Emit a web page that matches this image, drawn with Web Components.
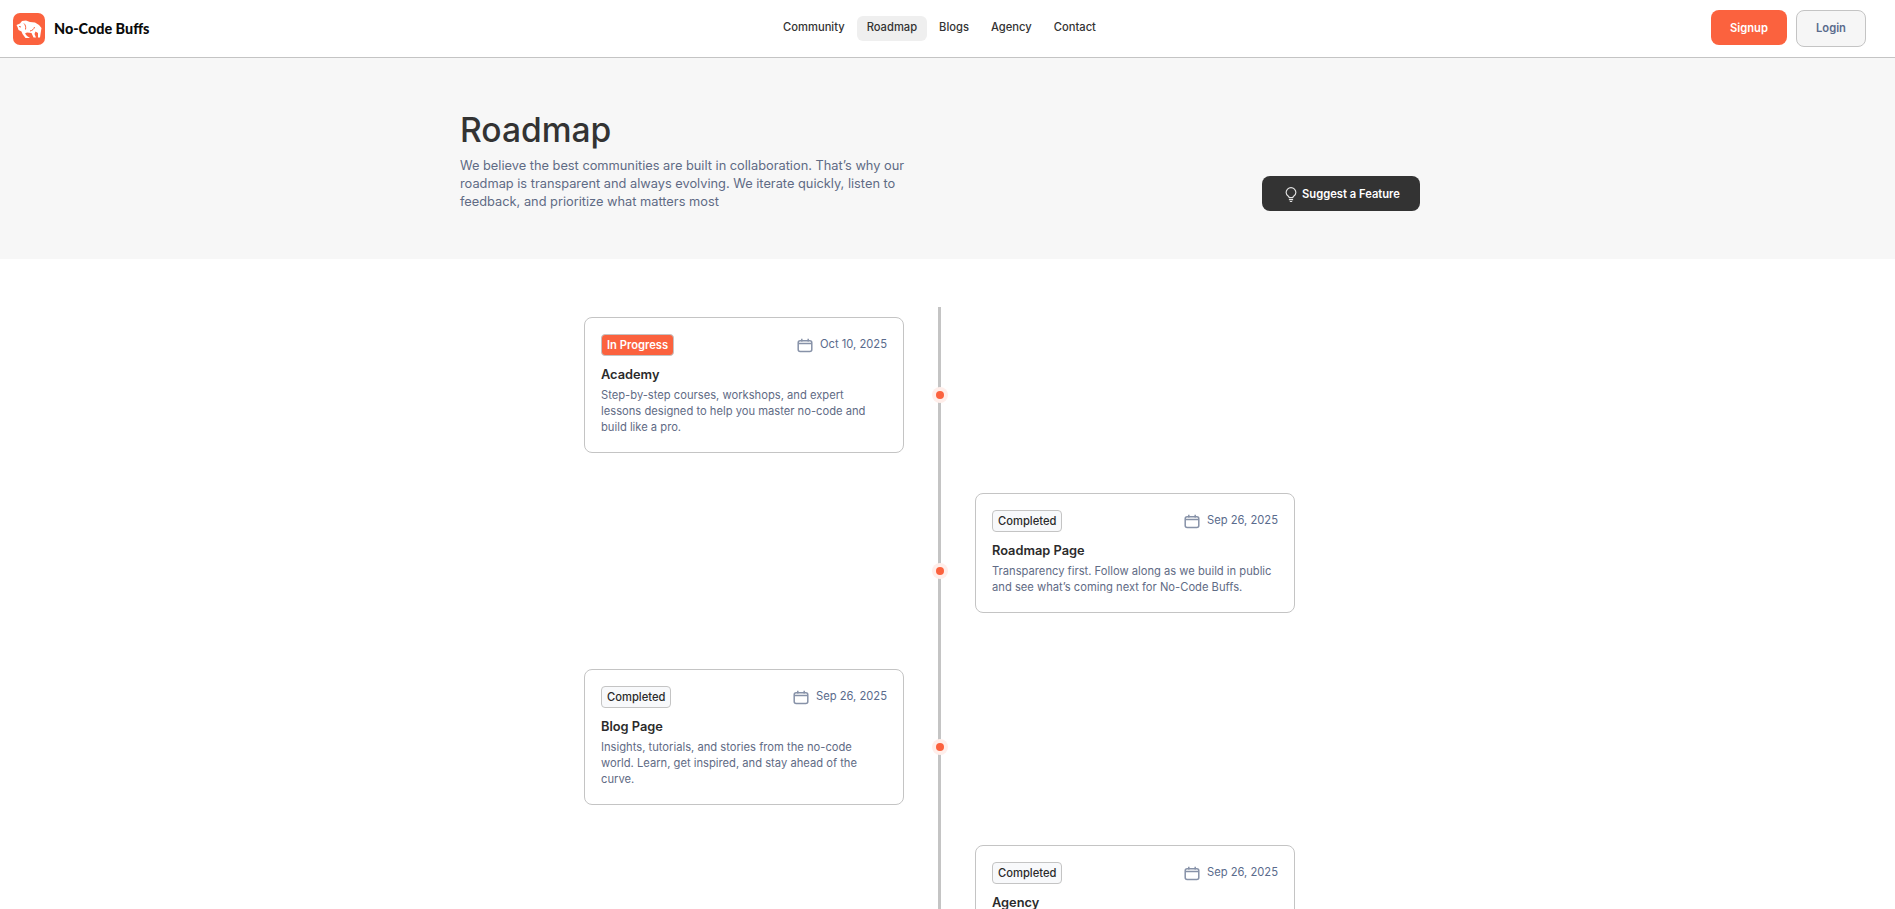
<!DOCTYPE html>
<html lang="en">
<head>
<meta charset="utf-8">
<title>Roadmap - No-Code Buffs</title>
<style>
  html, body { margin: 0; height: 100%; overflow: hidden; background: #fff; }
  body { font-family: Inter, "Liberation Sans", sans-serif; }
</style>
</head>
<body>
<site-nav></site-nav>
<roadmap-hero></roadmap-hero>
<road-timeline>
  <road-item side="left" status="In Progress" active date="Oct 10, 2025" heading="Academy">Step-by-step courses, workshops, and expert lessons designed to help you master no-code and build like a pro.</road-item>
  <road-item side="right" status="Completed" date="Sep 26, 2025" heading="Roadmap Page">Transparency first. Follow along as we build in public and see what’s coming next for No-Code Buffs.</road-item>
  <road-item side="left" status="Completed" date="Sep 26, 2025" heading="Blog Page">Insights, tutorials, and stories from the no-code world. Learn, get inspired, and stay ahead of the curve.</road-item>
  <road-item side="right" status="Completed" date="Sep 26, 2025" heading="Agency"></road-item>
</road-timeline>

<script>
/* top bar: logo, centered links, auth buttons */
class SiteNav extends HTMLElement {
  constructor() {
    super();
    const root = this.attachShadow({ mode: 'open' });
    root.innerHTML = `
      <style>
        :host { display: block; background: #fff; border-bottom: 1px solid #c4c4c4; }
        .bar { width: 1880px; height: 57px; box-sizing: border-box; padding: 0 14px 0 13px;
               display: grid; grid-template-columns: 1fr auto 1fr; align-items: center; }
        .logo { display: flex; align-items: center; gap: 9px; font-family: Lato, sans-serif;
                font-weight: 900; font-size: 14.4px; color: #0b0b0b; }
        .logo svg { width: 32px; height: 32px; display: block; }
        nav { display: flex; gap: 2px; font-size: 11.2px; font-weight: 500; color: #333; }
        nav a { padding: 0 10px; height: 25px; line-height: 22px; border-radius: 6px; }
        nav a.on { background: #efefef; }
        .auth { justify-self: end; align-self: start; padding-top: 10px; display: flex; gap: 9px; align-items: flex-start; font-size: 11.2px; font-weight: 600; }
        .auth span { display: flex; align-items: center; justify-content: center; box-sizing: border-box; border-radius: 8px; }
        .signup { width: 76px; height: 35px; background: #fb623e; color: #fff; }
        .login { width: 70px; height: 37px; padding-bottom: 2px; background: #f6f6f6; border: 1px solid #c4c4c4; color: #5a6b8c; }
      </style>
      <div class="bar">
        <div class="logo">
          <svg viewBox="0 0 32 32" aria-hidden="true">
            <rect width="32" height="32" rx="7" fill="#fb623e"/>
            <path fill="#fff" d="M3.500 12 7 10.500 9 8 13 7.500 17 9 22 9.500 26 12 28.500 15 28 18 27 24.500 25 24.500 25 20 22.500 18.500 21.500 21 23 24.500 20.500 24.500 18.500 20 14 19.500 12 20.500 14 23 17 25 12.500 25 9.500 21 8.500 18.500 5.500 17 4.500 14Z"/>
            <path fill="none" stroke="#fb623e" stroke-width="1" d="M11 10.500c1.500 1.500 2 3.500 1.500 6M17 18c2.500-.5 4-2 4.500-4M6 13.500l2 .5"/>
          </svg>
          <span>No-Code Buffs</span>
        </div>
        <nav>
          <a>Community</a><a class="on">Roadmap</a><a>Blogs</a><a>Agency</a><a>Contact</a>
        </nav>
        <div class="auth"><span class="signup">Signup</span><span class="login">Login</span></div>
      </div>`;
  }
}

/* gray header band with the title and the suggest button */
class RoadmapHero extends HTMLElement {
  constructor() {
    super();
    const root = this.attachShadow({ mode: 'open' });
    root.innerHTML = `
      <style>
        :host { display: block; background: #f7f7f7; height: 201px; }
        .wrap { width: 960px; margin-left: 460px; height: 100%; display: flex; justify-content: space-between; }
        h1 { margin: 0 0 5px; padding-top: 50px; font-size: 33.6px; line-height: 44px; font-weight: 500; color: #333; }
        p { margin: 0; width: 470px; font-size: 12.8px; line-height: 18px; color: #5f6b85; }
        .btn { margin-top: 118px; width: 158px; height: 35px; box-sizing: border-box; background: #333; color: #fff;
               border-radius: 8px; display: flex; align-items: center; justify-content: center; gap: 2px;
               font-size: 11.2px; font-weight: 600; }
        svg { width: 18px; height: 18px; fill: none; stroke: #e4e4e4; stroke-width: 1.5; stroke-linecap: round; stroke-linejoin: round; }
      </style>
      <div class="wrap">
        <div>
          <h1>Roadmap</h1>
          <p>We believe the best communities are built in collaboration. That’s why our roadmap is transparent and always evolving. We iterate quickly, listen to feedback, and prioritize what matters most</p>
        </div>
        <div class="btn">
          <svg viewBox="0 0 24 24" aria-hidden="true"><path d="M8.500 15c-1.900-1.300-3-3.200-3-5a6.500 6.500 0 0 1 13 0c0 1.800-1.100 3.700-3 5-.7.500-1 1-1 1.800h-5c0-.8-.3-1.300-1-1.800Z"/><path d="M9.800 19.500h4.400M11 22h2"/></svg>
          <span>Suggest a Feature</span>
        </div>
      </div>`;
  }
}

/* vertical line down the page, items sit either side of it */
class RoadTimeline extends HTMLElement {
  constructor() {
    super();
    const root = this.attachShadow({ mode: 'open' });
    root.innerHTML = `
      <style>
        :host { display: block; padding-top: 48px; }
        .line { position: relative; width: 711px; margin-left: 584px; display: grid; grid-auto-rows: 176px; padding-top: 10px; }
        .line::before { content: ""; position: absolute; left: 354px; top: 0; bottom: 0; width: 3px; background: #c4c4c4; }
      </style>
      <div class="line"><slot></slot></div>`;
  }
}

class RoadItem extends HTMLElement {
  connectedCallback() {
    if (this.shadowRoot) return;
    const root = this.attachShadow({ mode: 'open' });
    const side = this.getAttribute('side');
    root.innerHTML = `
      <style>
        :host { display: flex; position: relative; height: 176px; justify-content: ${side === 'left' ? 'flex-start' : 'flex-end'}; }
        .card { width: 320px; height: max-content; box-sizing: border-box; padding: 16px 16px 17px; background: #fff;
                border: 1px solid #c4c4c4; border-radius: 8px; }
        .top { display: flex; justify-content: space-between; align-items: center; height: 22px; }
        .badge { box-sizing: border-box; height: 22px; padding: 0 5px 1px; display: flex; align-items: center; border-radius: 4px;
                 border: 1px solid #c4c4c4; background: #f8f9fb; color: #2b2b2b; font-size: 11.2px; font-weight: 500; }
        .badge.on { background: #fb623e; color: #fff; font-weight: 600; }
        .date { display: flex; align-items: center; gap: 7px; font-size: 11.2px; color: #5a6b8c; }
        .date b { font-weight: 400; padding-bottom: 2px; }
        .date svg { width: 16px; height: 16px; fill: none; stroke: #8792a8; stroke-width: 1.500; }
        h3 { margin: 9px 0 0; font-size: 12.8px; line-height: 20px; font-weight: 600; color: #2b2b2b; }
        p { margin: 2px 0 0; font-size: 11.2px; line-height: 16px; color: #5f6b85; }
        .dot { position: absolute; left: 352px; top: 74px; width: 8px; height: 8px; border-radius: 50%;
               background: #fb623e; box-shadow: 0 0 0 4px #ffeeea; }
      </style>
      <div class="card">
        <div class="top">
          <span class="badge${this.hasAttribute('active') ? ' on' : ''}">${this.getAttribute('status')}</span>
          <span class="date">
            <svg viewBox="0 0 16 16" aria-hidden="true"><rect x="1.200" y="3.700" width="13.600" height="10.800" rx="2"/><path d="M1.200 6.500h13.600M4.800 1.800V4.500M11.200 1.800V4.500"/></svg>
            <b>${this.getAttribute('date')}</b>
          </span>
        </div>
        <h3>${this.getAttribute('heading')}</h3>
        <p><slot></slot></p>
      </div>
      <span class="dot"></span>`;
  }
}

customElements.define('site-nav', SiteNav);
customElements.define('roadmap-hero', RoadmapHero);
customElements.define('road-timeline', RoadTimeline);
customElements.define('road-item', RoadItem);
</script>
</body>
</html>
